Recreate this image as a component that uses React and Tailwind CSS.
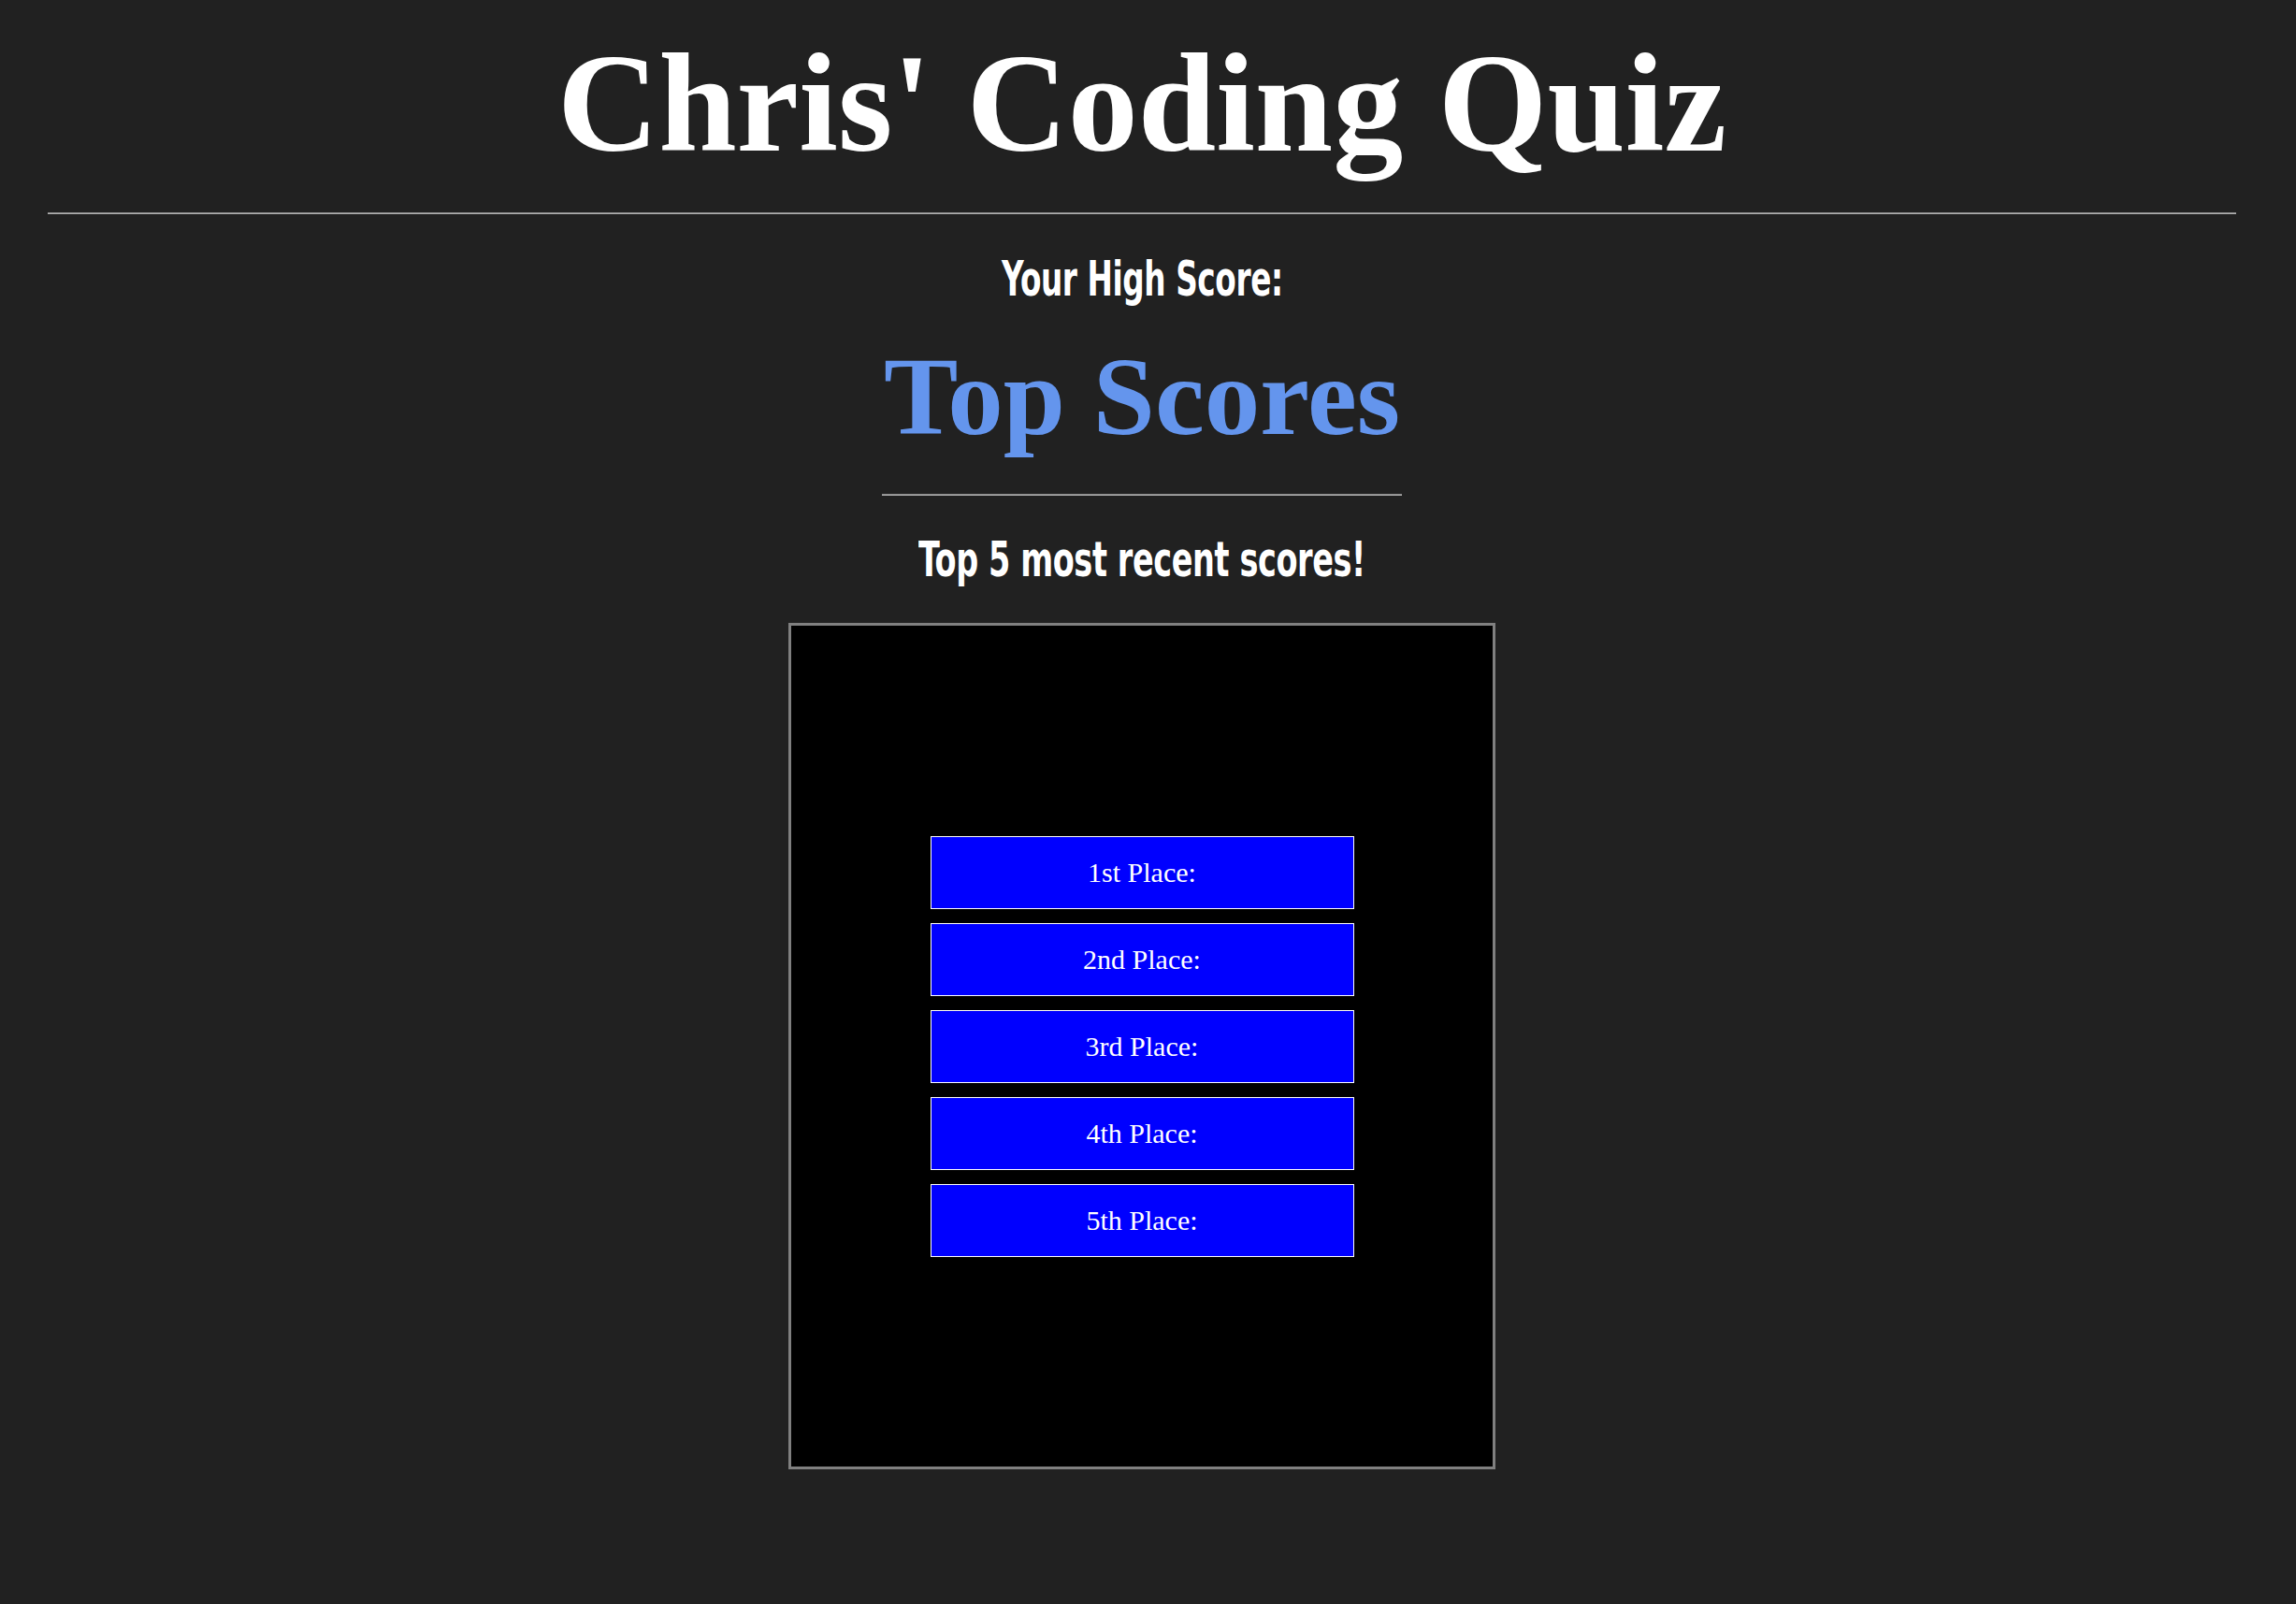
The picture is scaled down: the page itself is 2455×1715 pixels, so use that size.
export default function App() {
  const places = ["1st Place:", "2nd Place:", "3rd Place:", "4th Place:", "5th Place:"];
  const serif = "font-['Liberation_Serif','Times_New_Roman',serif]";
  const impact =
    "font-['Impact','DejaVu_Sans_Condensed','DejaVu_Sans',sans-serif] text-[46px] font-bold leading-none tracking-[-0.5px] scale-y-[1.14]";
  return (
    <div className="min-h-[1715px] w-full bg-[#212121] text-white">
      <div className="flex w-[2442px] flex-col items-center">
        <h1 className={`mt-[35px] text-[150px] font-bold leading-none ${serif}`}>Chris' Coding Quiz</h1>
        <div className="mt-[42px] h-[2px] w-[2340px] border-t border-t-[#8a8a8a] border-b border-b-[#b0b0b0]"></div>
        <h3 className={`mt-[46px] scale-x-[0.79] ${impact}`}>Your High Score:</h3>
        <div className="mt-[44px] flex flex-col items-center">
          <h2 className={`text-[119px] font-bold leading-none text-[#6495ED] ${serif}`}>Top Scores</h2>
          <div className="mt-[44px] h-[2px] w-[556px] border-t border-t-[#8a8a8a] border-b border-b-[#b0b0b0]"></div>
        </div>
        <h3 className={`mt-[45px] scale-x-[0.81] ${impact}`}>Top 5 most recent scores!</h3>
        <div className="mt-[45px] flex h-[905px] w-[756px] flex-col items-center justify-center gap-[15px] border-[3px] border-[#808080] bg-black">
          {places.map((p) => (
            <div
              key={p}
              className={`flex h-[78px] w-[453px] items-center justify-center border border-white bg-[#0000ff] text-[30px] leading-none ${serif}`}
            >
              {p}
            </div>
          ))}
        </div>
      </div>
    </div>
  );
}
